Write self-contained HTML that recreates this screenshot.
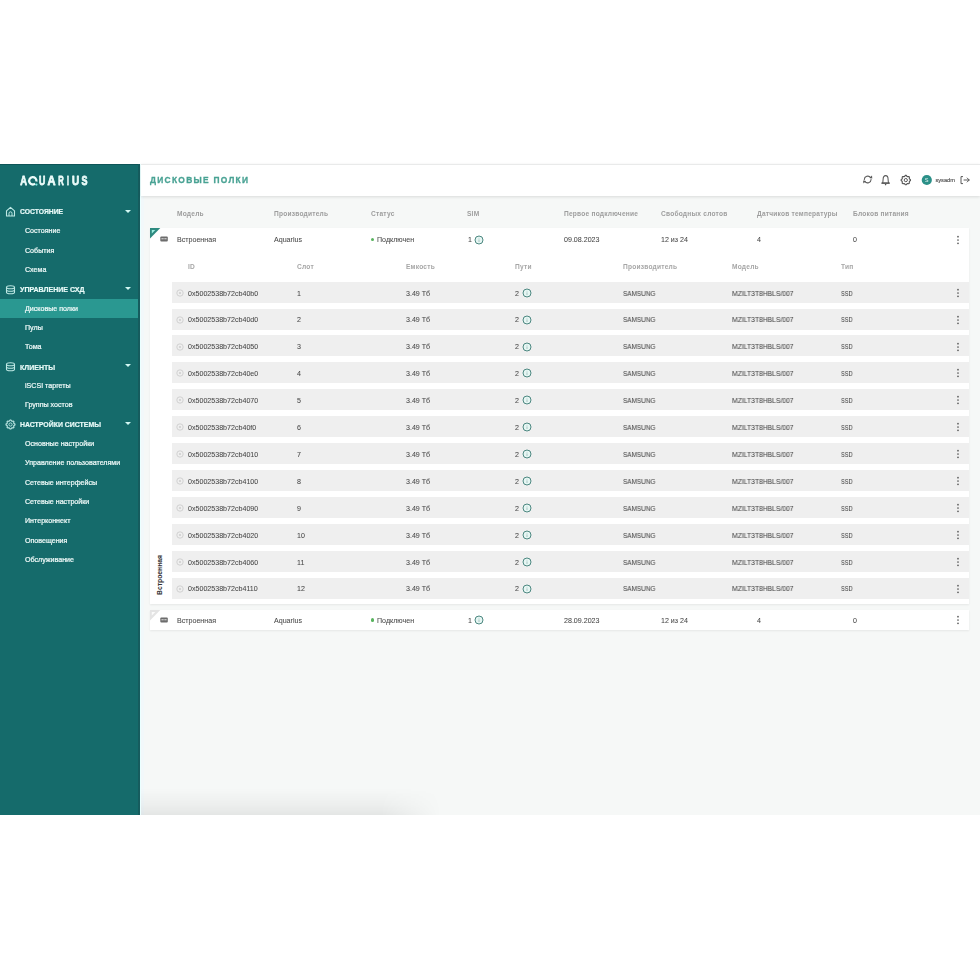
<!DOCTYPE html>
<html><head><meta charset="utf-8"><style>
html,body{margin:0;padding:0;width:980px;height:980px;background:#fff;overflow:hidden;position:relative}
.t{position:absolute;white-space:nowrap;will-change:transform;font-family:"Liberation Sans",sans-serif;line-height:1}
</style></head><body>
<div style="position:absolute;left:0;top:164px;width:139.6px;height:651px;background:#156b6b"></div>
<div style="position:absolute;left:0;top:164px;width:140px;height:1px;background:#0f5558"></div>
<svg width="100" height="20" viewBox="0 0 100 20" style="position:absolute;left:0;top:170px;will-change:transform"><g font-family="Liberation Sans" font-weight="700" font-size="12.4" fill="#ecfcfa" stroke="#ecfcfa" stroke-width="0.8" stroke-linejoin="round"><text x="20.20" y="15.2" textLength="6.7" lengthAdjust="spacingAndGlyphs">A</text><text x="39.00" y="15.2" textLength="6.3" lengthAdjust="spacingAndGlyphs">U</text><text x="47.50" y="15.2" textLength="8.0" lengthAdjust="spacingAndGlyphs">A</text><text x="58.20" y="15.2" textLength="5.5" lengthAdjust="spacingAndGlyphs">R</text><text x="67.10" y="15.2" textLength="1.9" lengthAdjust="spacingAndGlyphs">I</text><text x="72.00" y="15.2" textLength="7.2" lengthAdjust="spacingAndGlyphs">U</text><text x="81.40" y="15.2" textLength="6.0" lengthAdjust="spacingAndGlyphs">S</text></g><path d="M35.13 13.63A3.65 3.65 0 1 1 36.39 11.44" fill="none" stroke="#ecfcfa" stroke-width="2.3"/><circle cx="36.4" cy="14.6" r="1.15" fill="#7fe8e0"/></svg>
<svg width="11" height="11" viewBox="0 0 11 11" style="position:absolute;left:5px;top:206.30px"><path d="M1.5 10V4.8L5.5 1.3L9.5 4.8V10Z" fill="none" stroke="#bfe9e5" stroke-width="1.1" stroke-linejoin="round"/><path d="M4 10V7.3a1.5 1.5 0 0 1 3 0V10" fill="none" stroke="#bfe9e5" stroke-width="1"/></svg>
<div class="t" style="left:19.6px;top:209.16px;font-size:6.8px;font-weight:700;color:#e8faf8;-webkit-text-stroke:0.2px #e8faf8">СОСТОЯНИЕ</div>
<div style="position:absolute;left:125.3px;top:209.80px;width:0;height:0;border-left:3.2px solid transparent;border-right:3.2px solid transparent;border-top:3.5px solid #d2f8f4"></div>
<div class="t" style="left:25px;top:228.40px;font-size:7.1px;font-weight:400;color:#eef9f8;-webkit-text-stroke:0.22px #eef9f8">Состояние</div>
<div class="t" style="left:25px;top:247.73px;font-size:7.1px;font-weight:400;color:#eef9f8;-webkit-text-stroke:0.22px #eef9f8">События</div>
<div class="t" style="left:25px;top:267.06px;font-size:7.1px;font-weight:400;color:#eef9f8;-webkit-text-stroke:0.22px #eef9f8">Схема</div>
<svg width="11" height="11" viewBox="0 0 11 11" style="position:absolute;left:5px;top:283.62px"><ellipse cx="5.5" cy="3.2" rx="4" ry="1.5" fill="none" stroke="#bfe9e5" stroke-width="1.1"/><path d="M1.5 3.2V8.3C1.5 9.1 3.3 9.8 5.5 9.8S9.5 9.1 9.5 8.3V3.2M1.5 5.8C1.5 6.6 3.3 7.3 5.5 7.3S9.5 6.6 9.5 5.8" fill="none" stroke="#bfe9e5" stroke-width="1.1"/></svg>
<div class="t" style="left:19.6px;top:286.40px;font-size:7.05px;font-weight:700;color:#e8faf8;-webkit-text-stroke:0.2px #e8faf8">УПРАВЛЕНИЕ СХД</div>
<div style="position:absolute;left:125.3px;top:287.12px;width:0;height:0;border-left:3.2px solid transparent;border-right:3.2px solid transparent;border-top:3.5px solid #d2f8f4"></div>
<div style="position:absolute;left:0;top:298.95px;width:139px;height:19.3px;background:#2a9891"></div>
<div class="t" style="left:25px;top:305.72px;font-size:7.1px;font-weight:400;color:#eef9f8;-webkit-text-stroke:0.22px #eef9f8">Дисковые полки</div>
<div class="t" style="left:25px;top:325.05px;font-size:7.1px;font-weight:400;color:#eef9f8;-webkit-text-stroke:0.22px #eef9f8">Пулы</div>
<div class="t" style="left:25px;top:344.38px;font-size:7.1px;font-weight:400;color:#eef9f8;-webkit-text-stroke:0.22px #eef9f8">Тома</div>
<svg width="11" height="11" viewBox="0 0 11 11" style="position:absolute;left:5px;top:360.94px"><ellipse cx="5.5" cy="3.2" rx="4" ry="1.5" fill="none" stroke="#bfe9e5" stroke-width="1.1"/><path d="M1.5 3.2V8.3C1.5 9.1 3.3 9.8 5.5 9.8S9.5 9.1 9.5 8.3V3.2M1.5 5.8C1.5 6.6 3.3 7.3 5.5 7.3S9.5 6.6 9.5 5.8" fill="none" stroke="#bfe9e5" stroke-width="1.1"/></svg>
<div class="t" style="left:19.6px;top:363.74px;font-size:7.0px;font-weight:700;color:#e8faf8;-webkit-text-stroke:0.2px #e8faf8">КЛИЕНТЫ</div>
<div style="position:absolute;left:125.3px;top:364.44px;width:0;height:0;border-left:3.2px solid transparent;border-right:3.2px solid transparent;border-top:3.5px solid #d2f8f4"></div>
<div class="t" style="left:25px;top:383.04px;font-size:7.1px;font-weight:400;color:#eef9f8;-webkit-text-stroke:0.22px #eef9f8">iSCSI таргеты</div>
<div class="t" style="left:25px;top:402.37px;font-size:7.1px;font-weight:400;color:#eef9f8;-webkit-text-stroke:0.22px #eef9f8">Группы хостов</div>
<svg width="11" height="11" viewBox="0 0 11 11" style="position:absolute;left:5px;top:418.93px"><path d="M5.06 1.02L5.94 1.02L6.55 2.06L7.20 2.33L8.35 2.02L8.98 2.65L8.67 3.80L8.94 4.45L9.98 5.06L9.98 5.94L8.94 6.55L8.67 7.20L8.98 8.35L8.35 8.98L7.20 8.67L6.55 8.94L5.94 9.98L5.06 9.98L4.45 8.94L3.80 8.67L2.65 8.98L2.02 8.35L2.33 7.20L2.06 6.55L1.02 5.94L1.02 5.06L2.06 4.45L2.33 3.80L2.02 2.65L2.65 2.02L3.80 2.33L4.45 2.06Z" fill="none" stroke="#bfe9e5" stroke-width="1.1" stroke-linejoin="round"/><circle cx="5.5" cy="5.5" r="1.6" fill="none" stroke="#bfe9e5" stroke-width="0.9"/></svg>
<div class="t" style="left:19.6px;top:421.75px;font-size:6.92px;font-weight:700;color:#e8faf8;-webkit-text-stroke:0.2px #e8faf8">НАСТРОЙКИ СИСТЕМЫ</div>
<div style="position:absolute;left:125.3px;top:422.43px;width:0;height:0;border-left:3.2px solid transparent;border-right:3.2px solid transparent;border-top:3.5px solid #d2f8f4"></div>
<div class="t" style="left:25px;top:441.03px;font-size:7.1px;font-weight:400;color:#eef9f8;-webkit-text-stroke:0.22px #eef9f8">Основные настройки</div>
<div class="t" style="left:25px;top:460.36px;font-size:7.1px;font-weight:400;color:#eef9f8;-webkit-text-stroke:0.22px #eef9f8">Управление пользователями</div>
<div class="t" style="left:25px;top:479.69px;font-size:7.1px;font-weight:400;color:#eef9f8;-webkit-text-stroke:0.22px #eef9f8">Сетевые интерфейсы</div>
<div class="t" style="left:25px;top:499.02px;font-size:7.1px;font-weight:400;color:#eef9f8;-webkit-text-stroke:0.22px #eef9f8">Сетевые настройки</div>
<div class="t" style="left:25px;top:518.35px;font-size:7.1px;font-weight:400;color:#eef9f8;-webkit-text-stroke:0.22px #eef9f8">Интерконнект</div>
<div class="t" style="left:25px;top:537.68px;font-size:7.1px;font-weight:400;color:#eef9f8;-webkit-text-stroke:0.22px #eef9f8">Оповещения</div>
<div class="t" style="left:25px;top:557.01px;font-size:7.1px;font-weight:400;color:#eef9f8;-webkit-text-stroke:0.22px #eef9f8">Обслуживание</div>
<div style="position:absolute;left:139.6px;top:164px;width:840.4px;height:651px;background:#f6f8f7"></div>
<div style="position:absolute;left:138.4px;top:164px;width:1.2px;height:651px;background:#165c5e"></div>
<div style="position:absolute;left:139.6px;top:164px;width:1.4px;height:651px;background:#ebffff"></div>
<div style="position:absolute;left:141px;top:164px;width:2.5px;height:651px;background:#f2f8fa"></div>
<div style="position:absolute;left:140.6px;top:164px;width:839.4px;height:32px;background:#fff;box-shadow:0 1px 3px rgba(0,0,0,0.12);border-top:0.8px solid #e9eaea;box-sizing:border-box"></div>
<div class="t" style="left:150.3px;top:175.82px;font-size:8.4px;font-weight:700;color:#48a293;letter-spacing:1.3px;-webkit-text-stroke:0.3px #48a293">ДИСКОВЫЕ ПОЛКИ</div>
<svg width="120" height="20" viewBox="0 0 120 20" style="position:absolute;left:860px;top:170px;will-change:transform"><g fill="none" stroke="#595959" stroke-width="1.05" stroke-linecap="round" stroke-linejoin="round"><path d="M4.3 9.6A3.5 3.5 0 0 1 10.6 7.6"/><path d="M11.1 9.4A3.5 3.5 0 0 1 4.8 11.4"/><path d="M22.3 13.1C22.9 12.3 23.1 11 23.1 9.4C23.1 7 24.1 5.6 25.6 5.6C27.1 5.6 28.1 7 28.1 9.4C28.1 11 28.3 12.3 28.9 13.1Z"/><path d="M21.7 13.1H29.5"/></g><path d="M9.3 7.9L12.3 8.5L12 5.4Z" fill="#595959"/><path d="M6.1 11.1L3.1 10.5L3.4 13.6Z" fill="#595959"/><circle cx="25.6" cy="14.6" r="0.8" fill="#595959"/><path d="M45.34 5.42L46.26 5.42L46.93 6.37L47.64 6.66L48.78 6.47L49.43 7.12L49.24 8.26L49.53 8.97L50.48 9.64L50.48 10.56L49.53 11.23L49.24 11.94L49.43 13.08L48.78 13.73L47.64 13.54L46.93 13.83L46.26 14.78L45.34 14.78L44.67 13.83L43.96 13.54L42.82 13.73L42.17 13.08L42.36 11.94L42.07 11.23L41.12 10.56L41.12 9.64L42.07 8.97L42.36 8.26L42.17 7.12L42.82 6.47L43.96 6.66L44.67 6.37Z" fill="none" stroke="#555" stroke-width="1.1" stroke-linejoin="round"/><circle cx="45.8" cy="10.1" r="1.6" fill="none" stroke="#555" stroke-width="1"/><circle cx="66.8" cy="10" r="5.1" fill="#2b9088"/><text x="66.7" y="12.1" font-size="5.6" fill="#e8f6f4" text-anchor="middle" font-family="Liberation Sans">S</text><text x="75.4" y="11.9" font-size="5.8" fill="#4a4a4a" stroke="#4a4a4a" stroke-width="0.12" font-family="Liberation Sans" textLength="19.5" lengthAdjust="spacingAndGlyphs">sysadm</text><g fill="none" stroke="#5a5a5a" stroke-width="1" stroke-linecap="round" stroke-linejoin="round"><path d="M102.6 6.6H101V13.6H102.6"/><path d="M104 10H109.2M107.2 8L109.2 10L107.2 12"/></g></svg>
<div class="t" style="left:177px;top:210.72px;font-size:6.6px;font-weight:700;color:#9d9d9d;letter-spacing:0.22px">Модель</div>
<div class="t" style="left:274px;top:210.72px;font-size:6.6px;font-weight:700;color:#9d9d9d;letter-spacing:0.22px">Производитель</div>
<div class="t" style="left:370.6px;top:210.72px;font-size:6.6px;font-weight:700;color:#9d9d9d;letter-spacing:0.22px">Статус</div>
<div class="t" style="left:467px;top:210.72px;font-size:6.6px;font-weight:700;color:#9d9d9d;letter-spacing:0.22px">SIM</div>
<div class="t" style="left:564.2px;top:210.72px;font-size:6.6px;font-weight:700;color:#9d9d9d;letter-spacing:0.22px">Первое подключение</div>
<div class="t" style="left:660.5px;top:210.72px;font-size:6.6px;font-weight:700;color:#9d9d9d;letter-spacing:0.22px">Свободных слотов</div>
<div class="t" style="left:757.2px;top:210.72px;font-size:6.6px;font-weight:700;color:#9d9d9d;letter-spacing:0.22px">Датчиков температуры</div>
<div class="t" style="left:853px;top:210.72px;font-size:6.6px;font-weight:700;color:#9d9d9d;letter-spacing:0.22px">Блоков питания</div>
<div style="position:absolute;left:141px;top:788px;width:300px;height:27px;background:linear-gradient(to bottom, rgba(0,0,0,0), rgba(0,0,0,0.035) 60%, rgba(0,0,0,0.07));-webkit-mask-image:linear-gradient(to right, #000 0%, #000 80%, transparent 100%)"></div>
<div style="position:absolute;left:150.3px;top:227.8px;width:819.1px;height:376.6px;background:#fff;box-shadow:0 0.5px 2px rgba(0,0,0,0.07)"></div>
<svg width="11" height="11" viewBox="0 0 11 11" style="position:absolute;left:150.3px;top:227.8px"><path d="M0 0H10.3L0 10.6Z" fill="#2e8a80"/><path d="M1.8 1.9H5.3L1.8 5.4Z" fill="#9eeee0"/></svg>
<svg width="8" height="6" viewBox="0 0 8 6" style="position:absolute;left:160.4px;top:236.20px"><rect x="0.3" y="0.6" width="7.5" height="4.9" rx="1" fill="#6c6c6c"/><rect x="1.4" y="2.2" width="2.3" height="1.1" fill="#d6d6d6"/><rect x="4.3" y="2.2" width="2.3" height="1.1" fill="#d6d6d6"/></svg>
<div class="t" style="left:177px;top:237.37px;font-size:7.1px;font-weight:400;color:#484848;-webkit-text-stroke:0.05px #484848;">Встроенная</div>
<div class="t" style="left:274px;top:237.37px;font-size:7.1px;font-weight:400;color:#484848;-webkit-text-stroke:0.05px #484848;">Aquarius</div>
<div class="t" style="left:564.2px;top:237.37px;font-size:7.1px;font-weight:400;color:#484848;-webkit-text-stroke:0.05px #484848;">09.08.2023</div>
<div class="t" style="left:660.5px;top:237.37px;font-size:7.1px;font-weight:400;color:#484848;-webkit-text-stroke:0.05px #484848;">12 из 24</div>
<div class="t" style="left:757.2px;top:237.37px;font-size:7.1px;font-weight:400;color:#484848;-webkit-text-stroke:0.05px #484848;">4</div>
<div class="t" style="left:853px;top:237.37px;font-size:7.1px;font-weight:400;color:#484848;-webkit-text-stroke:0.05px #484848;">0</div>
<div style="position:absolute;left:370.6px;top:237.70px;width:3.6px;height:3.6px;border-radius:50%;background:#58b35e"></div>
<div class="t" style="left:376.7px;top:237.37px;font-size:7.1px;font-weight:400;color:#484848;-webkit-text-stroke:0.05px #484848;">Подключен</div>
<div class="t" style="left:468.2px;top:237.37px;font-size:7.1px;font-weight:400;color:#484848;-webkit-text-stroke:0.05px #484848;">1</div>
<svg width="12" height="12" viewBox="0 0 12 12" style="position:absolute;left:473.40px;top:233.50px"><circle cx="6" cy="6" r="4.0" fill="#e6f6f3" stroke="#4d8881" stroke-width="1"/><path d="M6 5.4V8" stroke="#80aaa4" stroke-width="0.6"/><circle cx="6" cy="4.2" r="0.4" fill="#80aaa4"/></svg>
<svg width="4" height="12" viewBox="0 0 4 12" style="position:absolute;left:956.40px;top:233.50px"><circle cx="2" cy="2.7" r="0.85" fill="#5a5a5a"/><circle cx="2" cy="6" r="0.85" fill="#5a5a5a"/><circle cx="2" cy="9.3" r="0.85" fill="#5a5a5a"/></svg>
<div class="t" style="left:188px;top:264.42px;font-size:6.6px;font-weight:700;color:#a6a6a6;letter-spacing:0.22px">ID</div>
<div class="t" style="left:297px;top:264.42px;font-size:6.6px;font-weight:700;color:#a6a6a6;letter-spacing:0.22px">Слот</div>
<div class="t" style="left:406px;top:264.42px;font-size:6.6px;font-weight:700;color:#a6a6a6;letter-spacing:0.22px">Емкость</div>
<div class="t" style="left:515px;top:264.42px;font-size:6.6px;font-weight:700;color:#a6a6a6;letter-spacing:0.22px">Пути</div>
<div class="t" style="left:623px;top:264.42px;font-size:6.6px;font-weight:700;color:#a6a6a6;letter-spacing:0.22px">Производитель</div>
<div class="t" style="left:732px;top:264.42px;font-size:6.6px;font-weight:700;color:#a6a6a6;letter-spacing:0.22px">Модель</div>
<div class="t" style="left:841px;top:264.42px;font-size:6.6px;font-weight:700;color:#a6a6a6;letter-spacing:0.22px">Тип</div>
<div style="position:absolute;left:172px;top:281.60px;width:797.4px;height:21.1px;background:#efefef"></div>
<svg width="8" height="8" viewBox="0 0 8 8" style="position:absolute;left:175.8px;top:288.70px"><circle cx="4" cy="4" r="3.2" fill="none" stroke="#c9c9c9" stroke-width="0.8"/><circle cx="4" cy="4" r="1.1" fill="#cfcfcf"/></svg>
<div class="t" style="left:188px;top:290.57px;font-size:7.1px;font-weight:400;color:#484848;-webkit-text-stroke:0.05px #484848;">0x5002538b72cb40b0</div>
<div class="t" style="left:297px;top:290.57px;font-size:7.1px;font-weight:400;color:#484848;-webkit-text-stroke:0.05px #484848;">1</div>
<div class="t" style="left:406px;top:290.57px;font-size:7.1px;font-weight:400;color:#484848;-webkit-text-stroke:0.05px #484848;">3.49 Тб</div>
<div class="t" style="left:515px;top:290.57px;font-size:7.1px;font-weight:400;color:#484848;-webkit-text-stroke:0.05px #484848;">2</div>
<div class="t" style="left:623px;top:290.57px;font-size:7.1px;font-weight:400;color:#484848;-webkit-text-stroke:0.05px #484848;transform:scaleX(0.906);transform-origin:0 50%">SAMSUNG</div>
<div class="t" style="left:732px;top:290.57px;font-size:7.1px;font-weight:400;color:#484848;-webkit-text-stroke:0.05px #484848;transform:scaleX(0.954);transform-origin:0 50%">MZILT3T8HBLS/007</div>
<div class="t" style="left:841px;top:290.57px;font-size:7.1px;font-weight:400;color:#484848;-webkit-text-stroke:0.05px #484848;transform:scaleX(0.8);transform-origin:0 50%">SSD</div>
<svg width="12" height="12" viewBox="0 0 12 12" style="position:absolute;left:521.20px;top:286.70px"><circle cx="6" cy="6" r="4.0" fill="#e6f6f3" stroke="#4d8881" stroke-width="1"/><path d="M6 5.4V8" stroke="#80aaa4" stroke-width="0.6"/><circle cx="6" cy="4.2" r="0.4" fill="#80aaa4"/></svg>
<svg width="4" height="12" viewBox="0 0 4 12" style="position:absolute;left:956.40px;top:286.70px"><circle cx="2" cy="2.7" r="0.85" fill="#5a5a5a"/><circle cx="2" cy="6" r="0.85" fill="#5a5a5a"/><circle cx="2" cy="9.3" r="0.85" fill="#5a5a5a"/></svg>
<div style="position:absolute;left:172px;top:308.50px;width:797.4px;height:21.1px;background:#efefef"></div>
<svg width="8" height="8" viewBox="0 0 8 8" style="position:absolute;left:175.8px;top:315.60px"><circle cx="4" cy="4" r="3.2" fill="none" stroke="#c9c9c9" stroke-width="0.8"/><circle cx="4" cy="4" r="1.1" fill="#cfcfcf"/></svg>
<div class="t" style="left:188px;top:317.47px;font-size:7.1px;font-weight:400;color:#484848;-webkit-text-stroke:0.05px #484848;">0x5002538b72cb40d0</div>
<div class="t" style="left:297px;top:317.47px;font-size:7.1px;font-weight:400;color:#484848;-webkit-text-stroke:0.05px #484848;">2</div>
<div class="t" style="left:406px;top:317.47px;font-size:7.1px;font-weight:400;color:#484848;-webkit-text-stroke:0.05px #484848;">3.49 Тб</div>
<div class="t" style="left:515px;top:317.47px;font-size:7.1px;font-weight:400;color:#484848;-webkit-text-stroke:0.05px #484848;">2</div>
<div class="t" style="left:623px;top:317.47px;font-size:7.1px;font-weight:400;color:#484848;-webkit-text-stroke:0.05px #484848;transform:scaleX(0.906);transform-origin:0 50%">SAMSUNG</div>
<div class="t" style="left:732px;top:317.47px;font-size:7.1px;font-weight:400;color:#484848;-webkit-text-stroke:0.05px #484848;transform:scaleX(0.954);transform-origin:0 50%">MZILT3T8HBLS/007</div>
<div class="t" style="left:841px;top:317.47px;font-size:7.1px;font-weight:400;color:#484848;-webkit-text-stroke:0.05px #484848;transform:scaleX(0.8);transform-origin:0 50%">SSD</div>
<svg width="12" height="12" viewBox="0 0 12 12" style="position:absolute;left:521.20px;top:313.60px"><circle cx="6" cy="6" r="4.0" fill="#e6f6f3" stroke="#4d8881" stroke-width="1"/><path d="M6 5.4V8" stroke="#80aaa4" stroke-width="0.6"/><circle cx="6" cy="4.2" r="0.4" fill="#80aaa4"/></svg>
<svg width="4" height="12" viewBox="0 0 4 12" style="position:absolute;left:956.40px;top:313.60px"><circle cx="2" cy="2.7" r="0.85" fill="#5a5a5a"/><circle cx="2" cy="6" r="0.85" fill="#5a5a5a"/><circle cx="2" cy="9.3" r="0.85" fill="#5a5a5a"/></svg>
<div style="position:absolute;left:172px;top:335.40px;width:797.4px;height:21.1px;background:#efefef"></div>
<svg width="8" height="8" viewBox="0 0 8 8" style="position:absolute;left:175.8px;top:342.50px"><circle cx="4" cy="4" r="3.2" fill="none" stroke="#c9c9c9" stroke-width="0.8"/><circle cx="4" cy="4" r="1.1" fill="#cfcfcf"/></svg>
<div class="t" style="left:188px;top:344.37px;font-size:7.1px;font-weight:400;color:#484848;-webkit-text-stroke:0.05px #484848;">0x5002538b72cb4050</div>
<div class="t" style="left:297px;top:344.37px;font-size:7.1px;font-weight:400;color:#484848;-webkit-text-stroke:0.05px #484848;">3</div>
<div class="t" style="left:406px;top:344.37px;font-size:7.1px;font-weight:400;color:#484848;-webkit-text-stroke:0.05px #484848;">3.49 Тб</div>
<div class="t" style="left:515px;top:344.37px;font-size:7.1px;font-weight:400;color:#484848;-webkit-text-stroke:0.05px #484848;">2</div>
<div class="t" style="left:623px;top:344.37px;font-size:7.1px;font-weight:400;color:#484848;-webkit-text-stroke:0.05px #484848;transform:scaleX(0.906);transform-origin:0 50%">SAMSUNG</div>
<div class="t" style="left:732px;top:344.37px;font-size:7.1px;font-weight:400;color:#484848;-webkit-text-stroke:0.05px #484848;transform:scaleX(0.954);transform-origin:0 50%">MZILT3T8HBLS/007</div>
<div class="t" style="left:841px;top:344.37px;font-size:7.1px;font-weight:400;color:#484848;-webkit-text-stroke:0.05px #484848;transform:scaleX(0.8);transform-origin:0 50%">SSD</div>
<svg width="12" height="12" viewBox="0 0 12 12" style="position:absolute;left:521.20px;top:340.50px"><circle cx="6" cy="6" r="4.0" fill="#e6f6f3" stroke="#4d8881" stroke-width="1"/><path d="M6 5.4V8" stroke="#80aaa4" stroke-width="0.6"/><circle cx="6" cy="4.2" r="0.4" fill="#80aaa4"/></svg>
<svg width="4" height="12" viewBox="0 0 4 12" style="position:absolute;left:956.40px;top:340.50px"><circle cx="2" cy="2.7" r="0.85" fill="#5a5a5a"/><circle cx="2" cy="6" r="0.85" fill="#5a5a5a"/><circle cx="2" cy="9.3" r="0.85" fill="#5a5a5a"/></svg>
<div style="position:absolute;left:172px;top:362.30px;width:797.4px;height:21.1px;background:#efefef"></div>
<svg width="8" height="8" viewBox="0 0 8 8" style="position:absolute;left:175.8px;top:369.40px"><circle cx="4" cy="4" r="3.2" fill="none" stroke="#c9c9c9" stroke-width="0.8"/><circle cx="4" cy="4" r="1.1" fill="#cfcfcf"/></svg>
<div class="t" style="left:188px;top:371.27px;font-size:7.1px;font-weight:400;color:#484848;-webkit-text-stroke:0.05px #484848;">0x5002538b72cb40e0</div>
<div class="t" style="left:297px;top:371.27px;font-size:7.1px;font-weight:400;color:#484848;-webkit-text-stroke:0.05px #484848;">4</div>
<div class="t" style="left:406px;top:371.27px;font-size:7.1px;font-weight:400;color:#484848;-webkit-text-stroke:0.05px #484848;">3.49 Тб</div>
<div class="t" style="left:515px;top:371.27px;font-size:7.1px;font-weight:400;color:#484848;-webkit-text-stroke:0.05px #484848;">2</div>
<div class="t" style="left:623px;top:371.27px;font-size:7.1px;font-weight:400;color:#484848;-webkit-text-stroke:0.05px #484848;transform:scaleX(0.906);transform-origin:0 50%">SAMSUNG</div>
<div class="t" style="left:732px;top:371.27px;font-size:7.1px;font-weight:400;color:#484848;-webkit-text-stroke:0.05px #484848;transform:scaleX(0.954);transform-origin:0 50%">MZILT3T8HBLS/007</div>
<div class="t" style="left:841px;top:371.27px;font-size:7.1px;font-weight:400;color:#484848;-webkit-text-stroke:0.05px #484848;transform:scaleX(0.8);transform-origin:0 50%">SSD</div>
<svg width="12" height="12" viewBox="0 0 12 12" style="position:absolute;left:521.20px;top:367.40px"><circle cx="6" cy="6" r="4.0" fill="#e6f6f3" stroke="#4d8881" stroke-width="1"/><path d="M6 5.4V8" stroke="#80aaa4" stroke-width="0.6"/><circle cx="6" cy="4.2" r="0.4" fill="#80aaa4"/></svg>
<svg width="4" height="12" viewBox="0 0 4 12" style="position:absolute;left:956.40px;top:367.40px"><circle cx="2" cy="2.7" r="0.85" fill="#5a5a5a"/><circle cx="2" cy="6" r="0.85" fill="#5a5a5a"/><circle cx="2" cy="9.3" r="0.85" fill="#5a5a5a"/></svg>
<div style="position:absolute;left:172px;top:389.20px;width:797.4px;height:21.1px;background:#efefef"></div>
<svg width="8" height="8" viewBox="0 0 8 8" style="position:absolute;left:175.8px;top:396.30px"><circle cx="4" cy="4" r="3.2" fill="none" stroke="#c9c9c9" stroke-width="0.8"/><circle cx="4" cy="4" r="1.1" fill="#cfcfcf"/></svg>
<div class="t" style="left:188px;top:398.17px;font-size:7.1px;font-weight:400;color:#484848;-webkit-text-stroke:0.05px #484848;">0x5002538b72cb4070</div>
<div class="t" style="left:297px;top:398.17px;font-size:7.1px;font-weight:400;color:#484848;-webkit-text-stroke:0.05px #484848;">5</div>
<div class="t" style="left:406px;top:398.17px;font-size:7.1px;font-weight:400;color:#484848;-webkit-text-stroke:0.05px #484848;">3.49 Тб</div>
<div class="t" style="left:515px;top:398.17px;font-size:7.1px;font-weight:400;color:#484848;-webkit-text-stroke:0.05px #484848;">2</div>
<div class="t" style="left:623px;top:398.17px;font-size:7.1px;font-weight:400;color:#484848;-webkit-text-stroke:0.05px #484848;transform:scaleX(0.906);transform-origin:0 50%">SAMSUNG</div>
<div class="t" style="left:732px;top:398.17px;font-size:7.1px;font-weight:400;color:#484848;-webkit-text-stroke:0.05px #484848;transform:scaleX(0.954);transform-origin:0 50%">MZILT3T8HBLS/007</div>
<div class="t" style="left:841px;top:398.17px;font-size:7.1px;font-weight:400;color:#484848;-webkit-text-stroke:0.05px #484848;transform:scaleX(0.8);transform-origin:0 50%">SSD</div>
<svg width="12" height="12" viewBox="0 0 12 12" style="position:absolute;left:521.20px;top:394.30px"><circle cx="6" cy="6" r="4.0" fill="#e6f6f3" stroke="#4d8881" stroke-width="1"/><path d="M6 5.4V8" stroke="#80aaa4" stroke-width="0.6"/><circle cx="6" cy="4.2" r="0.4" fill="#80aaa4"/></svg>
<svg width="4" height="12" viewBox="0 0 4 12" style="position:absolute;left:956.40px;top:394.30px"><circle cx="2" cy="2.7" r="0.85" fill="#5a5a5a"/><circle cx="2" cy="6" r="0.85" fill="#5a5a5a"/><circle cx="2" cy="9.3" r="0.85" fill="#5a5a5a"/></svg>
<div style="position:absolute;left:172px;top:416.10px;width:797.4px;height:21.1px;background:#efefef"></div>
<svg width="8" height="8" viewBox="0 0 8 8" style="position:absolute;left:175.8px;top:423.20px"><circle cx="4" cy="4" r="3.2" fill="none" stroke="#c9c9c9" stroke-width="0.8"/><circle cx="4" cy="4" r="1.1" fill="#cfcfcf"/></svg>
<div class="t" style="left:188px;top:425.07px;font-size:7.1px;font-weight:400;color:#484848;-webkit-text-stroke:0.05px #484848;">0x5002538b72cb40f0</div>
<div class="t" style="left:297px;top:425.07px;font-size:7.1px;font-weight:400;color:#484848;-webkit-text-stroke:0.05px #484848;">6</div>
<div class="t" style="left:406px;top:425.07px;font-size:7.1px;font-weight:400;color:#484848;-webkit-text-stroke:0.05px #484848;">3.49 Тб</div>
<div class="t" style="left:515px;top:425.07px;font-size:7.1px;font-weight:400;color:#484848;-webkit-text-stroke:0.05px #484848;">2</div>
<div class="t" style="left:623px;top:425.07px;font-size:7.1px;font-weight:400;color:#484848;-webkit-text-stroke:0.05px #484848;transform:scaleX(0.906);transform-origin:0 50%">SAMSUNG</div>
<div class="t" style="left:732px;top:425.07px;font-size:7.1px;font-weight:400;color:#484848;-webkit-text-stroke:0.05px #484848;transform:scaleX(0.954);transform-origin:0 50%">MZILT3T8HBLS/007</div>
<div class="t" style="left:841px;top:425.07px;font-size:7.1px;font-weight:400;color:#484848;-webkit-text-stroke:0.05px #484848;transform:scaleX(0.8);transform-origin:0 50%">SSD</div>
<svg width="12" height="12" viewBox="0 0 12 12" style="position:absolute;left:521.20px;top:421.20px"><circle cx="6" cy="6" r="4.0" fill="#e6f6f3" stroke="#4d8881" stroke-width="1"/><path d="M6 5.4V8" stroke="#80aaa4" stroke-width="0.6"/><circle cx="6" cy="4.2" r="0.4" fill="#80aaa4"/></svg>
<svg width="4" height="12" viewBox="0 0 4 12" style="position:absolute;left:956.40px;top:421.20px"><circle cx="2" cy="2.7" r="0.85" fill="#5a5a5a"/><circle cx="2" cy="6" r="0.85" fill="#5a5a5a"/><circle cx="2" cy="9.3" r="0.85" fill="#5a5a5a"/></svg>
<div style="position:absolute;left:172px;top:443.00px;width:797.4px;height:21.1px;background:#efefef"></div>
<svg width="8" height="8" viewBox="0 0 8 8" style="position:absolute;left:175.8px;top:450.10px"><circle cx="4" cy="4" r="3.2" fill="none" stroke="#c9c9c9" stroke-width="0.8"/><circle cx="4" cy="4" r="1.1" fill="#cfcfcf"/></svg>
<div class="t" style="left:188px;top:451.97px;font-size:7.1px;font-weight:400;color:#484848;-webkit-text-stroke:0.05px #484848;">0x5002538b72cb4010</div>
<div class="t" style="left:297px;top:451.97px;font-size:7.1px;font-weight:400;color:#484848;-webkit-text-stroke:0.05px #484848;">7</div>
<div class="t" style="left:406px;top:451.97px;font-size:7.1px;font-weight:400;color:#484848;-webkit-text-stroke:0.05px #484848;">3.49 Тб</div>
<div class="t" style="left:515px;top:451.97px;font-size:7.1px;font-weight:400;color:#484848;-webkit-text-stroke:0.05px #484848;">2</div>
<div class="t" style="left:623px;top:451.97px;font-size:7.1px;font-weight:400;color:#484848;-webkit-text-stroke:0.05px #484848;transform:scaleX(0.906);transform-origin:0 50%">SAMSUNG</div>
<div class="t" style="left:732px;top:451.97px;font-size:7.1px;font-weight:400;color:#484848;-webkit-text-stroke:0.05px #484848;transform:scaleX(0.954);transform-origin:0 50%">MZILT3T8HBLS/007</div>
<div class="t" style="left:841px;top:451.97px;font-size:7.1px;font-weight:400;color:#484848;-webkit-text-stroke:0.05px #484848;transform:scaleX(0.8);transform-origin:0 50%">SSD</div>
<svg width="12" height="12" viewBox="0 0 12 12" style="position:absolute;left:521.20px;top:448.10px"><circle cx="6" cy="6" r="4.0" fill="#e6f6f3" stroke="#4d8881" stroke-width="1"/><path d="M6 5.4V8" stroke="#80aaa4" stroke-width="0.6"/><circle cx="6" cy="4.2" r="0.4" fill="#80aaa4"/></svg>
<svg width="4" height="12" viewBox="0 0 4 12" style="position:absolute;left:956.40px;top:448.10px"><circle cx="2" cy="2.7" r="0.85" fill="#5a5a5a"/><circle cx="2" cy="6" r="0.85" fill="#5a5a5a"/><circle cx="2" cy="9.3" r="0.85" fill="#5a5a5a"/></svg>
<div style="position:absolute;left:172px;top:469.90px;width:797.4px;height:21.1px;background:#efefef"></div>
<svg width="8" height="8" viewBox="0 0 8 8" style="position:absolute;left:175.8px;top:477.00px"><circle cx="4" cy="4" r="3.2" fill="none" stroke="#c9c9c9" stroke-width="0.8"/><circle cx="4" cy="4" r="1.1" fill="#cfcfcf"/></svg>
<div class="t" style="left:188px;top:478.87px;font-size:7.1px;font-weight:400;color:#484848;-webkit-text-stroke:0.05px #484848;">0x5002538b72cb4100</div>
<div class="t" style="left:297px;top:478.87px;font-size:7.1px;font-weight:400;color:#484848;-webkit-text-stroke:0.05px #484848;">8</div>
<div class="t" style="left:406px;top:478.87px;font-size:7.1px;font-weight:400;color:#484848;-webkit-text-stroke:0.05px #484848;">3.49 Тб</div>
<div class="t" style="left:515px;top:478.87px;font-size:7.1px;font-weight:400;color:#484848;-webkit-text-stroke:0.05px #484848;">2</div>
<div class="t" style="left:623px;top:478.87px;font-size:7.1px;font-weight:400;color:#484848;-webkit-text-stroke:0.05px #484848;transform:scaleX(0.906);transform-origin:0 50%">SAMSUNG</div>
<div class="t" style="left:732px;top:478.87px;font-size:7.1px;font-weight:400;color:#484848;-webkit-text-stroke:0.05px #484848;transform:scaleX(0.954);transform-origin:0 50%">MZILT3T8HBLS/007</div>
<div class="t" style="left:841px;top:478.87px;font-size:7.1px;font-weight:400;color:#484848;-webkit-text-stroke:0.05px #484848;transform:scaleX(0.8);transform-origin:0 50%">SSD</div>
<svg width="12" height="12" viewBox="0 0 12 12" style="position:absolute;left:521.20px;top:475.00px"><circle cx="6" cy="6" r="4.0" fill="#e6f6f3" stroke="#4d8881" stroke-width="1"/><path d="M6 5.4V8" stroke="#80aaa4" stroke-width="0.6"/><circle cx="6" cy="4.2" r="0.4" fill="#80aaa4"/></svg>
<svg width="4" height="12" viewBox="0 0 4 12" style="position:absolute;left:956.40px;top:475.00px"><circle cx="2" cy="2.7" r="0.85" fill="#5a5a5a"/><circle cx="2" cy="6" r="0.85" fill="#5a5a5a"/><circle cx="2" cy="9.3" r="0.85" fill="#5a5a5a"/></svg>
<div style="position:absolute;left:172px;top:496.80px;width:797.4px;height:21.1px;background:#efefef"></div>
<svg width="8" height="8" viewBox="0 0 8 8" style="position:absolute;left:175.8px;top:503.90px"><circle cx="4" cy="4" r="3.2" fill="none" stroke="#c9c9c9" stroke-width="0.8"/><circle cx="4" cy="4" r="1.1" fill="#cfcfcf"/></svg>
<div class="t" style="left:188px;top:505.77px;font-size:7.1px;font-weight:400;color:#484848;-webkit-text-stroke:0.05px #484848;">0x5002538b72cb4090</div>
<div class="t" style="left:297px;top:505.77px;font-size:7.1px;font-weight:400;color:#484848;-webkit-text-stroke:0.05px #484848;">9</div>
<div class="t" style="left:406px;top:505.77px;font-size:7.1px;font-weight:400;color:#484848;-webkit-text-stroke:0.05px #484848;">3.49 Тб</div>
<div class="t" style="left:515px;top:505.77px;font-size:7.1px;font-weight:400;color:#484848;-webkit-text-stroke:0.05px #484848;">2</div>
<div class="t" style="left:623px;top:505.77px;font-size:7.1px;font-weight:400;color:#484848;-webkit-text-stroke:0.05px #484848;transform:scaleX(0.906);transform-origin:0 50%">SAMSUNG</div>
<div class="t" style="left:732px;top:505.77px;font-size:7.1px;font-weight:400;color:#484848;-webkit-text-stroke:0.05px #484848;transform:scaleX(0.954);transform-origin:0 50%">MZILT3T8HBLS/007</div>
<div class="t" style="left:841px;top:505.77px;font-size:7.1px;font-weight:400;color:#484848;-webkit-text-stroke:0.05px #484848;transform:scaleX(0.8);transform-origin:0 50%">SSD</div>
<svg width="12" height="12" viewBox="0 0 12 12" style="position:absolute;left:521.20px;top:501.90px"><circle cx="6" cy="6" r="4.0" fill="#e6f6f3" stroke="#4d8881" stroke-width="1"/><path d="M6 5.4V8" stroke="#80aaa4" stroke-width="0.6"/><circle cx="6" cy="4.2" r="0.4" fill="#80aaa4"/></svg>
<svg width="4" height="12" viewBox="0 0 4 12" style="position:absolute;left:956.40px;top:501.90px"><circle cx="2" cy="2.7" r="0.85" fill="#5a5a5a"/><circle cx="2" cy="6" r="0.85" fill="#5a5a5a"/><circle cx="2" cy="9.3" r="0.85" fill="#5a5a5a"/></svg>
<div style="position:absolute;left:172px;top:523.70px;width:797.4px;height:21.1px;background:#efefef"></div>
<svg width="8" height="8" viewBox="0 0 8 8" style="position:absolute;left:175.8px;top:530.80px"><circle cx="4" cy="4" r="3.2" fill="none" stroke="#c9c9c9" stroke-width="0.8"/><circle cx="4" cy="4" r="1.1" fill="#cfcfcf"/></svg>
<div class="t" style="left:188px;top:532.67px;font-size:7.1px;font-weight:400;color:#484848;-webkit-text-stroke:0.05px #484848;">0x5002538b72cb4020</div>
<div class="t" style="left:297px;top:532.67px;font-size:7.1px;font-weight:400;color:#484848;-webkit-text-stroke:0.05px #484848;">10</div>
<div class="t" style="left:406px;top:532.67px;font-size:7.1px;font-weight:400;color:#484848;-webkit-text-stroke:0.05px #484848;">3.49 Тб</div>
<div class="t" style="left:515px;top:532.67px;font-size:7.1px;font-weight:400;color:#484848;-webkit-text-stroke:0.05px #484848;">2</div>
<div class="t" style="left:623px;top:532.67px;font-size:7.1px;font-weight:400;color:#484848;-webkit-text-stroke:0.05px #484848;transform:scaleX(0.906);transform-origin:0 50%">SAMSUNG</div>
<div class="t" style="left:732px;top:532.67px;font-size:7.1px;font-weight:400;color:#484848;-webkit-text-stroke:0.05px #484848;transform:scaleX(0.954);transform-origin:0 50%">MZILT3T8HBLS/007</div>
<div class="t" style="left:841px;top:532.67px;font-size:7.1px;font-weight:400;color:#484848;-webkit-text-stroke:0.05px #484848;transform:scaleX(0.8);transform-origin:0 50%">SSD</div>
<svg width="12" height="12" viewBox="0 0 12 12" style="position:absolute;left:521.20px;top:528.80px"><circle cx="6" cy="6" r="4.0" fill="#e6f6f3" stroke="#4d8881" stroke-width="1"/><path d="M6 5.4V8" stroke="#80aaa4" stroke-width="0.6"/><circle cx="6" cy="4.2" r="0.4" fill="#80aaa4"/></svg>
<svg width="4" height="12" viewBox="0 0 4 12" style="position:absolute;left:956.40px;top:528.80px"><circle cx="2" cy="2.7" r="0.85" fill="#5a5a5a"/><circle cx="2" cy="6" r="0.85" fill="#5a5a5a"/><circle cx="2" cy="9.3" r="0.85" fill="#5a5a5a"/></svg>
<div style="position:absolute;left:172px;top:550.60px;width:797.4px;height:21.1px;background:#efefef"></div>
<svg width="8" height="8" viewBox="0 0 8 8" style="position:absolute;left:175.8px;top:557.70px"><circle cx="4" cy="4" r="3.2" fill="none" stroke="#c9c9c9" stroke-width="0.8"/><circle cx="4" cy="4" r="1.1" fill="#cfcfcf"/></svg>
<div class="t" style="left:188px;top:559.57px;font-size:7.1px;font-weight:400;color:#484848;-webkit-text-stroke:0.05px #484848;">0x5002538b72cb4060</div>
<div class="t" style="left:297px;top:559.57px;font-size:7.1px;font-weight:400;color:#484848;-webkit-text-stroke:0.05px #484848;">11</div>
<div class="t" style="left:406px;top:559.57px;font-size:7.1px;font-weight:400;color:#484848;-webkit-text-stroke:0.05px #484848;">3.49 Тб</div>
<div class="t" style="left:515px;top:559.57px;font-size:7.1px;font-weight:400;color:#484848;-webkit-text-stroke:0.05px #484848;">2</div>
<div class="t" style="left:623px;top:559.57px;font-size:7.1px;font-weight:400;color:#484848;-webkit-text-stroke:0.05px #484848;transform:scaleX(0.906);transform-origin:0 50%">SAMSUNG</div>
<div class="t" style="left:732px;top:559.57px;font-size:7.1px;font-weight:400;color:#484848;-webkit-text-stroke:0.05px #484848;transform:scaleX(0.954);transform-origin:0 50%">MZILT3T8HBLS/007</div>
<div class="t" style="left:841px;top:559.57px;font-size:7.1px;font-weight:400;color:#484848;-webkit-text-stroke:0.05px #484848;transform:scaleX(0.8);transform-origin:0 50%">SSD</div>
<svg width="12" height="12" viewBox="0 0 12 12" style="position:absolute;left:521.20px;top:555.70px"><circle cx="6" cy="6" r="4.0" fill="#e6f6f3" stroke="#4d8881" stroke-width="1"/><path d="M6 5.4V8" stroke="#80aaa4" stroke-width="0.6"/><circle cx="6" cy="4.2" r="0.4" fill="#80aaa4"/></svg>
<svg width="4" height="12" viewBox="0 0 4 12" style="position:absolute;left:956.40px;top:555.70px"><circle cx="2" cy="2.7" r="0.85" fill="#5a5a5a"/><circle cx="2" cy="6" r="0.85" fill="#5a5a5a"/><circle cx="2" cy="9.3" r="0.85" fill="#5a5a5a"/></svg>
<div style="position:absolute;left:172px;top:577.50px;width:797.4px;height:21.1px;background:#efefef"></div>
<svg width="8" height="8" viewBox="0 0 8 8" style="position:absolute;left:175.8px;top:584.60px"><circle cx="4" cy="4" r="3.2" fill="none" stroke="#c9c9c9" stroke-width="0.8"/><circle cx="4" cy="4" r="1.1" fill="#cfcfcf"/></svg>
<div class="t" style="left:188px;top:586.47px;font-size:7.1px;font-weight:400;color:#484848;-webkit-text-stroke:0.05px #484848;">0x5002538b72cb4110</div>
<div class="t" style="left:297px;top:586.47px;font-size:7.1px;font-weight:400;color:#484848;-webkit-text-stroke:0.05px #484848;">12</div>
<div class="t" style="left:406px;top:586.47px;font-size:7.1px;font-weight:400;color:#484848;-webkit-text-stroke:0.05px #484848;">3.49 Тб</div>
<div class="t" style="left:515px;top:586.47px;font-size:7.1px;font-weight:400;color:#484848;-webkit-text-stroke:0.05px #484848;">2</div>
<div class="t" style="left:623px;top:586.47px;font-size:7.1px;font-weight:400;color:#484848;-webkit-text-stroke:0.05px #484848;transform:scaleX(0.906);transform-origin:0 50%">SAMSUNG</div>
<div class="t" style="left:732px;top:586.47px;font-size:7.1px;font-weight:400;color:#484848;-webkit-text-stroke:0.05px #484848;transform:scaleX(0.954);transform-origin:0 50%">MZILT3T8HBLS/007</div>
<div class="t" style="left:841px;top:586.47px;font-size:7.1px;font-weight:400;color:#484848;-webkit-text-stroke:0.05px #484848;transform:scaleX(0.8);transform-origin:0 50%">SSD</div>
<svg width="12" height="12" viewBox="0 0 12 12" style="position:absolute;left:521.20px;top:582.60px"><circle cx="6" cy="6" r="4.0" fill="#e6f6f3" stroke="#4d8881" stroke-width="1"/><path d="M6 5.4V8" stroke="#80aaa4" stroke-width="0.6"/><circle cx="6" cy="4.2" r="0.4" fill="#80aaa4"/></svg>
<svg width="4" height="12" viewBox="0 0 4 12" style="position:absolute;left:956.40px;top:582.60px"><circle cx="2" cy="2.7" r="0.85" fill="#5a5a5a"/><circle cx="2" cy="6" r="0.85" fill="#5a5a5a"/><circle cx="2" cy="9.3" r="0.85" fill="#5a5a5a"/></svg>
<svg width="12" height="50" viewBox="0 0 12 50" style="position:absolute;left:154px;top:550px"><text x="0" y="0" transform="translate(7.8 45) rotate(-90)" font-family="Liberation Sans" font-weight="700" font-size="7" fill="#2e2e2e" textLength="40" lengthAdjust="spacingAndGlyphs">Встроенная</text></svg>
<div style="position:absolute;left:150.3px;top:609.8px;width:819.1px;height:20.7px;background:#fff;box-shadow:0 0.5px 2px rgba(0,0,0,0.07)"></div>
<svg width="11" height="11" viewBox="0 0 11 11" style="position:absolute;left:150.3px;top:609.8px"><path d="M0 0H10.3L0 10.6Z" fill="#e4e4e4"/><path d="M1.8 1.9H5.3L1.8 5.4Z" fill="#fbfbfb"/></svg>
<svg width="8" height="6" viewBox="0 0 8 6" style="position:absolute;left:160.4px;top:616.90px"><rect x="0.3" y="0.6" width="7.5" height="4.9" rx="1" fill="#6c6c6c"/><rect x="1.4" y="2.2" width="2.3" height="1.1" fill="#d6d6d6"/><rect x="4.3" y="2.2" width="2.3" height="1.1" fill="#d6d6d6"/></svg>
<div class="t" style="left:177px;top:618.07px;font-size:7.1px;font-weight:400;color:#484848;-webkit-text-stroke:0.05px #484848;">Встроенная</div>
<div class="t" style="left:274px;top:618.07px;font-size:7.1px;font-weight:400;color:#484848;-webkit-text-stroke:0.05px #484848;">Aquarius</div>
<div class="t" style="left:564.2px;top:618.07px;font-size:7.1px;font-weight:400;color:#484848;-webkit-text-stroke:0.05px #484848;">28.09.2023</div>
<div class="t" style="left:660.5px;top:618.07px;font-size:7.1px;font-weight:400;color:#484848;-webkit-text-stroke:0.05px #484848;">12 из 24</div>
<div class="t" style="left:757.2px;top:618.07px;font-size:7.1px;font-weight:400;color:#484848;-webkit-text-stroke:0.05px #484848;">4</div>
<div class="t" style="left:853px;top:618.07px;font-size:7.1px;font-weight:400;color:#484848;-webkit-text-stroke:0.05px #484848;">0</div>
<div style="position:absolute;left:370.6px;top:618.40px;width:3.6px;height:3.6px;border-radius:50%;background:#58b35e"></div>
<div class="t" style="left:376.7px;top:618.07px;font-size:7.1px;font-weight:400;color:#484848;-webkit-text-stroke:0.05px #484848;">Подключен</div>
<div class="t" style="left:468.2px;top:618.07px;font-size:7.1px;font-weight:400;color:#484848;-webkit-text-stroke:0.05px #484848;">1</div>
<svg width="12" height="12" viewBox="0 0 12 12" style="position:absolute;left:473.40px;top:614.20px"><circle cx="6" cy="6" r="4.0" fill="#e6f6f3" stroke="#4d8881" stroke-width="1"/><path d="M6 5.4V8" stroke="#80aaa4" stroke-width="0.6"/><circle cx="6" cy="4.2" r="0.4" fill="#80aaa4"/></svg>
<svg width="4" height="12" viewBox="0 0 4 12" style="position:absolute;left:956.40px;top:614.20px"><circle cx="2" cy="2.7" r="0.85" fill="#5a5a5a"/><circle cx="2" cy="6" r="0.85" fill="#5a5a5a"/><circle cx="2" cy="9.3" r="0.85" fill="#5a5a5a"/></svg>
</body></html>
